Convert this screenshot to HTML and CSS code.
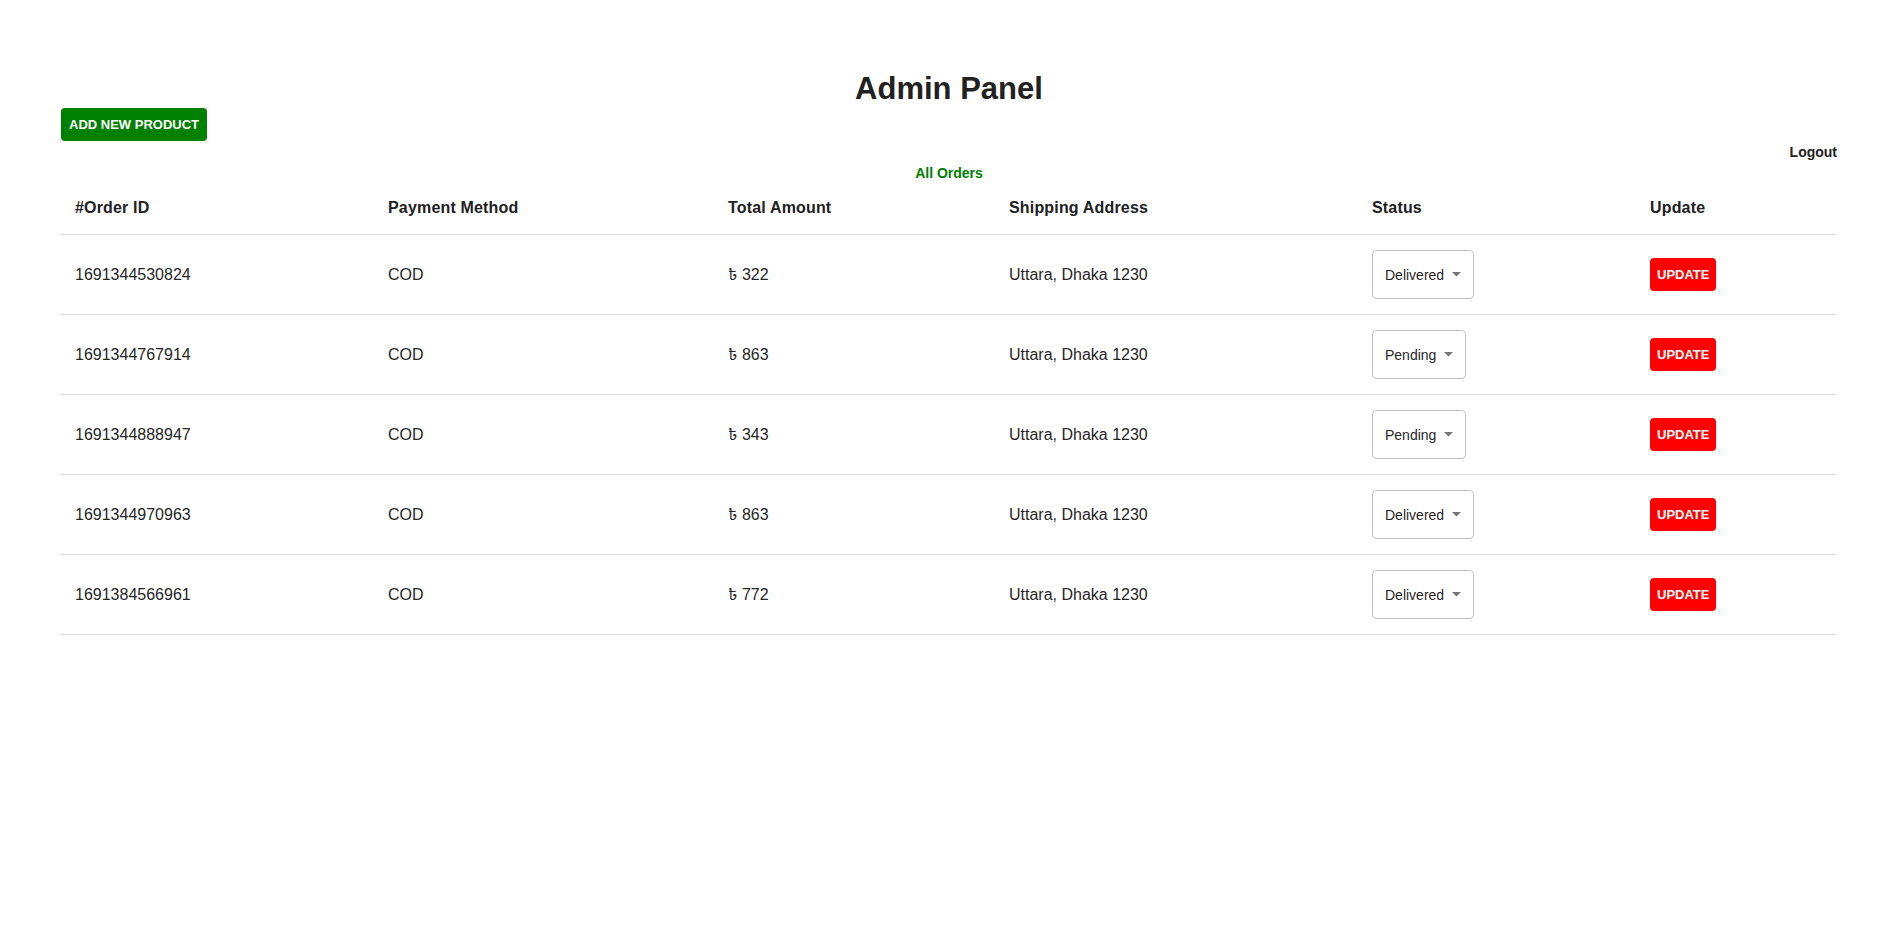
FILE: index.html
```html
<!DOCTYPE html>
<html lang="en">
<head>
<meta charset="utf-8">
<title>Admin Panel</title>
<link rel="stylesheet" href="styles.css">
</head>
<body>
<div class="page">
  <h1 class="title">Admin Panel</h1>
  <div class="toolbar"><button class="btn btn-add">ADD NEW PRODUCT</button></div>
  <div class="logout-row"><a class="logout" href="#">Logout</a></div>
  <h2 class="section-title">All Orders</h2>
  <table class="orders">
    <colgroup>
      <col class="c-id"><col class="c-pay"><col class="c-total"><col class="c-ship"><col class="c-status"><col class="c-update">
    </colgroup>
    <thead>
      <tr><th>#Order ID</th><th>Payment Method</th><th>Total Amount</th><th>Shipping Address</th><th>Status</th><th>Update</th></tr>
    </thead>
    <tbody>
      <tr><td>1691344530824</td><td>COD</td><td>৳ 322</td><td>Uttara, Dhaka 1230</td>
        <td><div class="select"><span>Delivered</span><svg class="arrow" width="9" height="5" viewBox="0 0 9 5"><polygon points="0,0 9,0 4.5,4.5"/></svg></div></td>
        <td><button class="btn btn-update">UPDATE</button></td></tr>
      <tr><td>1691344767914</td><td>COD</td><td>৳ 863</td><td>Uttara, Dhaka 1230</td>
        <td><div class="select"><span>Pending</span><svg class="arrow" width="9" height="5" viewBox="0 0 9 5"><polygon points="0,0 9,0 4.5,4.5"/></svg></div></td>
        <td><button class="btn btn-update">UPDATE</button></td></tr>
      <tr><td>1691344888947</td><td>COD</td><td>৳ 343</td><td>Uttara, Dhaka 1230</td>
        <td><div class="select"><span>Pending</span><svg class="arrow" width="9" height="5" viewBox="0 0 9 5"><polygon points="0,0 9,0 4.5,4.5"/></svg></div></td>
        <td><button class="btn btn-update">UPDATE</button></td></tr>
      <tr><td>1691344970963</td><td>COD</td><td>৳ 863</td><td>Uttara, Dhaka 1230</td>
        <td><div class="select"><span>Delivered</span><svg class="arrow" width="9" height="5" viewBox="0 0 9 5"><polygon points="0,0 9,0 4.5,4.5"/></svg></div></td>
        <td><button class="btn btn-update">UPDATE</button></td></tr>
      <tr><td>1691384566961</td><td>COD</td><td>৳ 772</td><td>Uttara, Dhaka 1230</td>
        <td><div class="select"><span>Delivered</span><svg class="arrow" width="9" height="5" viewBox="0 0 9 5"><polygon points="0,0 9,0 4.5,4.5"/></svg></div></td>
        <td><button class="btn btn-update">UPDATE</button></td></tr>
    </tbody>
  </table>
</div>
</body>
</html>
```
FILE: styles.css
```css
* { box-sizing: border-box; }
html, body { margin: 0; padding: 0; background: #fff; }
body {
  font-family: "Liberation Sans", Arial, "Noto Sans Bengali", "Noto Sans", "DejaVu Sans", sans-serif;
  color: #212121;
}
.page { padding: 0 61px; }
.title {
  margin: 70px 0 0;
  font-size: 31px;
  line-height: 37px;
  font-weight: 700;
  text-align: center;
  color: #212121;
}
.toolbar { margin-top: 1px; display: flex; }
.btn {
  font-family: "Liberation Sans", Arial, sans-serif;
  font-weight: 700;
  font-size: 13px;
  line-height: 19px;
  color: #fff;
  border: none;
  border-radius: 4px;
  cursor: pointer;
  padding: 7px 7px;
}
.btn-add { background: #008000; padding: 7px 8px; }
.btn-update { background: #ff0000; }
.logout-row {
  margin-top: 3px;
  display: flex;
  justify-content: flex-end;
}
.logout {
  font-size: 14px;
  line-height: 16px;
  font-weight: 700;
  color: #212121;
  text-decoration: none;
}
.section-title {
  margin: 5px 0 0;
  font-size: 14px;
  line-height: 16px;
  font-weight: 700;
  color: #008000;
  text-align: center;
}
.orders {
  width: 100%;
  table-layout: fixed;
  border-collapse: collapse;
}
.c-id { width: 311px; }
.c-pay { width: 340px; }
.c-total { width: 281px; }
.c-ship { width: 363px; }
.c-status { width: 278px; }
.c-update { width: 203px; }
.orders th {
  text-align: left;
  font-size: 16px;
  font-weight: 700;
  letter-spacing: 0.01071em;
  line-height: 24px;
  padding: 15px 16px 14px;
  border-bottom: 1px solid #e0e0e0;
  color: #212121;
}
.orders td {
  font-size: 16px;
  line-height: 20px;
  padding: 15px 16px;
  height: 80px;
  vertical-align: middle;
  border-bottom: 1px solid #e0e0e0;
  color: #262626;
}
.orders th:first-child, .orders td:first-child { padding-left: 14px; }
.select {
  display: inline-flex;
  align-items: center;
  gap: 8px;
  height: 49px;
  padding: 0 12px 0 12px;
  border: 1px solid #c4c4c4;
  border-radius: 4px;
  font-size: 14px;
  color: #262626;
  vertical-align: middle;
}
.arrow { fill: #757575; display: block; }
```
